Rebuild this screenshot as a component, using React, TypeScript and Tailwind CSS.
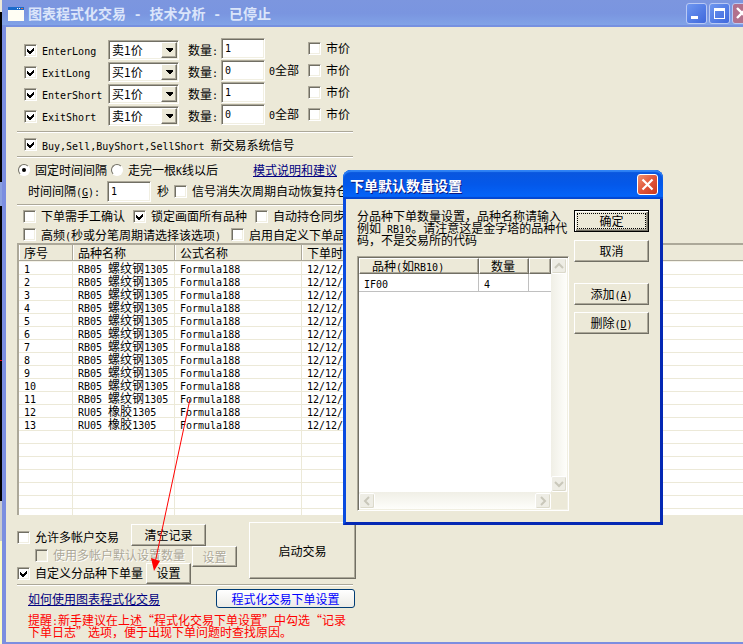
import { useState, type ReactNode } from "react";
import clsx from "clsx";

const sunken =
  "border border-t-[#aca899] border-l-[#aca899] border-b-white border-r-white bg-white shadow-[inset_1px_1px_0_#716f64,inset_-1px_-1px_0_#f1efe2]";
const raised =
  "border border-t-white border-l-white border-b-[#716f64] border-r-[#716f64] bg-[#ece9d8] shadow-[inset_-1px_-1px_0_#aca899]";

const orders = [
  { name: "EnterLong", price: "卖1价", qty: "1", all: false },
  { name: "ExitLong", price: "买1价", qty: "0", all: true },
  { name: "EnterShort", price: "买1价", qty: "1", all: false },
  { name: "ExitShort", price: "卖1价", qty: "0", all: true },
];

const rows = [
  ...Array.from({ length: 11 }, () => "RB05 螺纹钢1305"),
  "RU05 橡胶1305",
  "RU05 橡胶1305",
];
const emptyRows = [14, 15, 16, 17, 18, 19];

// Half-width text, 6px per character next to the 12px Chinese glyphs
function En({ children }: { children: ReactNode }) {
  return (
    <span className="font-['DejaVu_Sans_Mono',monospace] text-[10px] leading-[8px]">{children}</span>
  );
}

// Mixed string: ASCII runs go through <En>
function Txt({ children }: { children: string }) {
  return (
    <>
      {children.split(/([\x20-\x7e]+)/).map((part, i) =>
        i % 2 ? <En key={i}>{part}</En> : part,
      )}
    </>
  );
}

function Check({
  children,
  checked = false,
  disabled = false,
  className,
}: {
  children: ReactNode;
  checked?: boolean;
  disabled?: boolean;
  className?: string;
}) {
  return (
    <label className={clsx("flex items-center gap-[5px]", className)}>
      <span className="relative flex shrink-0">
        <input
          type="checkbox"
          defaultChecked={checked}
          disabled={disabled}
          className={clsx("peer size-[13px] appearance-none", sunken, "disabled:bg-[#ece9d8]")}
        />
        <svg
          viewBox="0 0 13 13"
          className="pointer-events-none absolute inset-0 hidden size-[13px] peer-checked:block"
          shapeRendering="crispEdges"
        >
          <path d="M3 5v3l2 2h1l4-4V3L6 7H5z" fill="#000" />
        </svg>
      </span>
      <span className={clsx(disabled && "text-[#aca899] [text-shadow:1px_1px_0_#fff]")}>
        {children}
      </span>
    </label>
  );
}

function Radio({
  label,
  checked,
  onChange,
}: {
  label: string;
  checked: boolean;
  onChange: () => void;
}) {
  return (
    <label className="flex items-center gap-[5px]">
      <span className="relative flex shrink-0">
        <input
          type="radio"
          name="interval"
          checked={checked}
          onChange={onChange}
          className="peer size-3 appearance-none rounded-full border border-t-[#716f64] border-r-white border-b-white border-l-[#716f64] bg-white"
        />
        <span className="pointer-events-none absolute top-1 left-1 hidden size-1 rounded-full bg-black peer-checked:block" />
      </span>
      <span>
        <Txt>{label}</Txt>
      </span>
    </label>
  );
}

function Button({
  children,
  className,
  disabled,
}: {
  children: ReactNode;
  className?: string;
  disabled?: boolean;
}) {
  return (
    <button
      type="button"
      disabled={disabled}
      className={clsx(
        "shrink-0",
        raised,
        disabled && "text-[#aca899] [text-shadow:1px_1px_0_#fff]",
        className,
      )}
    >
      {children}
    </button>
  );
}

function Divider({ className }: { className?: string }) {
  return (
    <hr className={clsx("h-[2px] w-[336px] border-0 border-t border-[#aca899] bg-white", className)} />
  );
}

function ScrollButton({ d, label }: { d: string; label: string }) {
  return (
    <button
      type="button"
      aria-label={label}
      className="flex size-4 shrink-0 items-center justify-center rounded-xs border border-white bg-[#eeede5] shadow-[inset_-1px_-1px_0_#dcdacb]"
    >
      <svg viewBox="0 0 10 10" className="size-[10px]">
        <path d={d} fill="none" stroke="#c9c7ba" strokeWidth="2" />
      </svg>
    </button>
  );
}

function TitleBar() {
  const box =
    "flex size-[21px] items-center justify-center rounded-[3px] border border-[#b9c9f5]";
  return (
    <header className="flex h-[27px] items-center bg-linear-to-b from-[#7c96df] via-[#7a95e0] to-[#82a5e8] pl-[6px] shadow-[inset_0_-2px_0_#7690e0]">
      <svg viewBox="0 0 16 14" className="h-[14px] w-4" shapeRendering="crispEdges">
        <rect width="16" height="14" fill="#fffef4" />
        <rect width="16" height="3" fill="#1a6bcb" />
        <rect x="9" y="1" width="1" height="1" fill="#fff" />
        <rect x="11" y="1" width="1" height="1" fill="#fff" />
        <rect x="13" y="1" width="2" height="1" fill="#e8703a" />
      </svg>
      <h1 className="ml-1 flex-1 text-[14px] leading-none font-bold text-[#dbe5fa]">
        图表程式化交易
        <span className="font-['DejaVu_Sans_Mono',monospace] text-[13px]"> - </span>
        技术分析
        <span className="font-['DejaVu_Sans_Mono',monospace] text-[13px]"> - </span>
        已停止
      </h1>
      <div className="mr-[-10px] flex gap-[2px]">
        <button type="button" aria-label="最小化" className={clsx(box, "bg-linear-to-br from-[#6f97f0] to-[#3f67dc]")}>
          <svg viewBox="0 0 19 19" className="size-[19px]" shapeRendering="crispEdges">
            <rect x="4" y="12" width="7" height="3" fill="#fff" />
          </svg>
        </button>
        <button type="button" aria-label="最大化" className={clsx(box, "bg-linear-to-br from-[#6f97f0] to-[#3f67dc]")}>
          <svg viewBox="0 0 19 19" className="size-[19px]" shapeRendering="crispEdges">
            <path d="M4 4h11v11H4zM5 7v7h9V7z" fill="#fff" fillRule="evenodd" />
          </svg>
        </button>
        <button type="button" aria-label="关闭" className={clsx(box, "bg-[#b2708c]")}>
          <svg viewBox="0 0 19 19" className="size-[19px]">
            <path d="M4 4l10 10M14 4L4 14" stroke="#fff" strokeWidth="2.4" />
          </svg>
        </button>
      </div>
    </header>
  );
}

function OrderRow({ order }: { order: (typeof orders)[number] }) {
  return (
    <div className="grid h-[22px] grid-cols-[84px_80px_33px_48px_39px_1fr] pl-[7px]">
      <Check checked className="h-5 self-end">
        <Txt>{order.name}</Txt>
      </Check>
      <div className="relative w-[71px] self-end">
        <select
          aria-label={`${order.name} 价格`}
          defaultValue={order.price}
          className={clsx("block h-[20px] w-full appearance-none pl-[3px] leading-none", sunken)}
        >
          <option>卖1价</option>
          <option>买1价</option>
        </select>
        <span
          className={clsx(
            "pointer-events-none absolute inset-y-[2px] right-[2px] flex w-4 items-center justify-center",
            raised,
          )}
        >
          <svg viewBox="0 0 7 4" className="h-1 w-[7px]" shapeRendering="crispEdges">
            <path d="M0 0h7v1L4 4H3L0 1z" fill="#000" />
          </svg>
        </span>
      </div>
      <span className="self-end leading-5">
        <Txt>数量:</Txt>
      </span>
      <input
        aria-label={`${order.name} 数量`}
        defaultValue={order.qty}
        className={clsx("h-[21px] w-11 px-[3px] font-['DejaVu_Sans_Mono',monospace] text-[10px]", sunken)}
      />
      <span className="leading-5">{order.all && <Txt>0全部</Txt>}</span>
      <Check className="h-5">市价</Check>
    </div>
  );
}

function RecordTable() {
  const th =
    "h-[15px] border-r border-[#aca899] p-0 pl-[5px] text-left font-normal shadow-[inset_1px_0_0_#fff] last:border-r-0";
  const td = "h-[13px] border-r border-b border-[#ece9d8] p-0 pl-[5px] last:border-r-0";
  return (
    <div className="overflow-hidden border-t-2 border-l-2 border-[#aca899] bg-white">
      <table className="w-full table-fixed border-separate border-spacing-0 leading-[12px]">
        <colgroup>
          <col className="w-[54px]" />
          <col className="w-[102px]" />
          <col className="w-[127px]" />
          <col />
        </colgroup>
        <thead className="bg-[#ece9d8]">
          <tr>
            <th className={th}>序号</th>
            <th className={th}>品种名称</th>
            <th className={th}>公式名称</th>
            <th className={th}>下单时间</th>
          </tr>
          <tr>
            <td colSpan={4} className="h-[2px] border-t border-[#aca899] bg-[#f4f2e8] p-0" />
          </tr>
        </thead>
        <tbody>
          {rows.map((name, i) => (
            <tr key={i}>
              <td className={td}>
                <Txt>{String(i + 1)}</Txt>
              </td>
              <td className={td}>
                <Txt>{name}</Txt>
              </td>
              <td className={td}>
                <Txt>Formula188</Txt>
              </td>
              <td className={td}>
                <Txt>12/12/</Txt>
              </td>
            </tr>
          ))}
          {emptyRows.map((n) => (
            <tr key={n}>
              <td className={td} />
              <td className={td} />
              <td className={td} />
              <td className={td} />
            </tr>
          ))}
          <tr>
            <td className="h-[6px] border-r border-[#ece9d8] p-0" />
            <td className="border-r border-[#ece9d8] p-0" />
            <td className="border-r border-[#ece9d8] p-0" />
            <td className="p-0" />
          </tr>
        </tbody>
      </table>
    </div>
  );
}

function QuantityDialog() {
  const th = clsx("h-4 p-0 text-left font-normal", raised);
  const td = "h-[18px] border-r border-b border-[#c0c0c0] p-0 pl-[5px]";
  return (
    <section
      role="dialog"
      aria-labelledby="dialog-title"
      className="absolute top-[170px] left-[343px] flex h-[355px] w-[320px] flex-col rounded-t-lg border-x-[3px] border-b-[3px] border-t-0 border-l-[#0a4be0] border-r-[#0428b4] border-b-[#0428b4] bg-[#0a4be0]"
    >
      <header className="-mx-[3px] flex h-[29px] shrink-0 items-center justify-between rounded-t-lg bg-linear-to-b from-[#0a56dc] via-[#0458ea] to-[#0466fb] pr-[5px] pl-[7px] shadow-[inset_0_2px_1px_#2f83f5,inset_0_-2px_1px_#0446d0]">
        <h2
          id="dialog-title"
          className="text-[14px] leading-none font-bold text-white [text-shadow:1px_1px_0_#0a1883]"
        >
          下单默认数量设置
        </h2>
        <button
          type="button"
          aria-label="关闭"
          className="flex size-[21px] items-center justify-center rounded-[3px] border border-white bg-linear-to-br from-[#f0906f] via-[#e0553a] to-[#c8381c]"
        >
          <svg viewBox="0 0 19 19" className="size-[19px]">
            <path d="M4.500 4.500l10 10M14.500 4.500l-10 10" stroke="#fff" strokeWidth="2.2" />
          </svg>
        </button>
      </header>
      <div className="flex flex-1 justify-between bg-[#ece9d8] pt-[11px] pr-[11px] pb-[11px] pl-[11px]">
        <div className="flex w-[212px] flex-col">
          <p className="h-[46px] leading-[12px]">
            <Txt>{"分品种下单数量设置，品种名称请输入\n例如 RB10。请注意这是金字塔的品种代\n码，不是交易所的代码"}</Txt>
          </p>
          <div className={clsx("flex flex-1 flex-col p-px", sunken)}>
            <div className="flex flex-1">
              <div className="flex-1">
                <table className="w-full table-fixed border-separate border-spacing-0 leading-[12px]">
                  <colgroup>
                    <col className="w-[120px]" />
                    <col className="w-[50px]" />
                    <col />
                  </colgroup>
                  <thead>
                    <tr>
                      <th className={clsx(th, "pl-3")}>
                        <Txt>品种(如RB10)</Txt>
                      </th>
                      <th className={clsx(th, "pl-[11px]")}>数量</th>
                      <th className={th} />
                    </tr>
                  </thead>
                  <tbody>
                    <tr>
                      <td className={td}>
                        <Txt>IF00</Txt>
                      </td>
                      <td className={td}>
                        <Txt>4</Txt>
                      </td>
                      <td className="border-b border-[#c0c0c0] p-0" />
                    </tr>
                  </tbody>
                </table>
              </div>
              <div className="flex w-4 flex-col justify-between bg-linear-to-r from-[#f0efe6] to-[#fefefb]">
                <ScrollButton label="向上" d="M1 7l4-4 4 4" />
                <ScrollButton label="向下" d="M1 3l4 4 4-4" />
              </div>
            </div>
            <div className="flex h-[17px] bg-[#ece9d8] pr-4">
              <div className="flex flex-1 items-center justify-between bg-linear-to-b from-[#f0efe6] to-[#fefefb]">
                <ScrollButton label="向左" d="M7 1L3 5l4 4" />
                <ScrollButton label="向右" d="M3 1l4 4-4 4" />
              </div>
            </div>
          </div>
        </div>
        <div className="flex w-[75px] flex-col">
          <button
            type="button"
            className="h-[22px] border border-black bg-[#ece9d8] p-[2px] shadow-[inset_1px_1px_0_#fff,inset_-1px_-1px_0_#716f64,inset_-2px_-2px_0_#aca899]"
          >
            <span className="block border border-dotted border-black leading-[14px]">确定</span>
          </button>
          <Button className="mt-2 h-[22px]">取消</Button>
          <Button className="mt-[21px] h-[22px]">
            添加
            <En>
              (<u>A</u>)
            </En>
          </Button>
          <Button className="mt-[7px] h-[22px]">
            删除
            <En>
              (<u>D</u>)
            </En>
          </Button>
        </div>
      </div>
    </section>
  );
}

export default function App() {
  const [mode, setMode] = useState("fixed");

  return (
    <div className="relative flex min-h-screen overflow-hidden bg-black font-['Noto_Sans_CJK_SC',sans-serif] text-[12px] leading-[16px] whitespace-pre text-black">
      {/* Sliver of the chart window behind */}
      <div className="flex w-[2px] shrink-0 flex-col">
        <div className="h-3 bg-[#ece9d8]" />
        <div className="h-[170px] bg-black" />
        <div className="h-6 bg-[#8aa0e0]" />
        <div className="h-[154px] bg-black" />
        <div className="h-px bg-red-600" />
        <div className="h-[140px] bg-black" />
        <div className="h-10 bg-[#c8cad0]" />
        <div className="flex-1 bg-[#fbfbc8]" />
      </div>

      <main className="flex min-w-0 flex-1 flex-col border-b-2 border-[#7b8ee0] bg-[#ece9d8]">
        <TitleBar />
        <div className="flex-1 border-l-4 border-[#7b8ee0] pt-[11px] pl-[11px]">
          <div className="w-[336px]">
            {orders.map((order) => (
              <OrderRow key={order.name} order={order} />
            ))}
            <Divider className="mt-[5px]" />
            <Check checked className="h-[23px] pl-[7px]">
              <Txt>Buy,Sell,BuyShort,SellShort 新交易系统信号</Txt>
            </Check>
            <Divider />
            <div className="mt-[2px] flex h-5 items-center gap-1 pl-px">
              <Radio label="固定时间间隔" checked={mode === "fixed"} onChange={() => setMode("fixed")} />
              <Radio label="走完一根K线以后" checked={mode === "bar"} onChange={() => setMode("bar")} />
              <a href="#help" className="ml-auto mr-4 text-[#000080] underline">
                模式说明和建议
              </a>
            </div>
            <div className="flex h-[22px] items-center pl-[11px]">
              <label htmlFor="interval-value" className="w-[79px]">
                时间间隔
                <En>
                  (<u>G</u>):
                </En>
              </label>
              <input
                id="interval-value"
                defaultValue="1"
                className={clsx("h-[21px] w-11 px-[3px] font-['DejaVu_Sans_Mono',monospace] text-[10px]", sunken)}
              />
              <span className="ml-[6px]">秒</span>
              <Check className="ml-[5px]">信号消失次周期自动恢复持仓</Check>
            </div>
            <Divider className="mt-[2px]" />
            <div className="flex h-5 items-center gap-2 pl-[6px]">
              <Check>下单需手工确认</Check>
              <Check checked>锁定画面所有品种</Check>
              <Check>自动持仓同步</Check>
            </div>
            <div className="flex h-[17px] items-center gap-[10px] pl-[6px]">
              <Check>
                <Txt>高频(秒或分笔周期请选择该选项)</Txt>
              </Check>
              <Check>启用自定义下单品</Check>
            </div>
          </div>

          <RecordTable />

          <div className="mt-[7px] flex w-[339px] justify-between">
            <div className="pt-[2px]">
              <div className="flex h-[22px]">
                <Check className="h-[18px] w-[114px] self-end">允许多帐户交易</Check>
                <Button className="h-[22px] w-[75px]">清空记录</Button>
              </div>
              <div className="flex h-[18px] pl-[18px]">
                <Check disabled className="h-[18px] w-[157px]">
                  使用多帐户默认设置数量
                </Check>
                <Button disabled className="h-[21px] w-[45px]">
                  设置
                </Button>
              </div>
              <div className="flex h-[18px] items-center">
                <Check checked className="w-[129px]">
                  自定义分品种下单量
                </Check>
                <Button className="h-[21px] w-[45px]">设置</Button>
              </div>
            </div>
            <Button className="h-[57px] w-[107px]">启动交易</Button>
          </div>
          <Divider className="mt-[2px]" />
          <div className="flex h-[25px] w-[338px] items-center justify-between pl-[11px]">
            <a href="#guide" className="text-[#000080] underline">
              如何使用图表程式化交易
            </a>
            <button
              type="button"
              className="h-[19px] w-[139px] rounded-[3px] border border-[#003c74] bg-linear-to-b from-white to-[#ecebe6] leading-none text-[#0000ff]"
            >
              程式化交易下单设置
            </button>
          </div>
          <p className="mt-[3px] pl-[11px] leading-[12px] text-[#ff0000]">
            <Txt>{"提醒:新手建议在上述“程式化交易下单设置”中勾选“记录\n下单日志”选项，便于出现下单问题时查找原因。"}</Txt>
          </p>
        </div>
      </main>

      {/* Red pointer from the record list to the 设置 button */}
      <svg
        viewBox="0 0 40 173"
        className="pointer-events-none absolute top-[398px] left-[150px] h-[173px] w-10"
      >
        <path d="M40 1L5 165" stroke="#ff0000" strokeWidth="1" />
        <path d="M1 160l9 3-6 10z" fill="#ff0000" />
      </svg>

      <QuantityDialog />
    </div>
  );
}
